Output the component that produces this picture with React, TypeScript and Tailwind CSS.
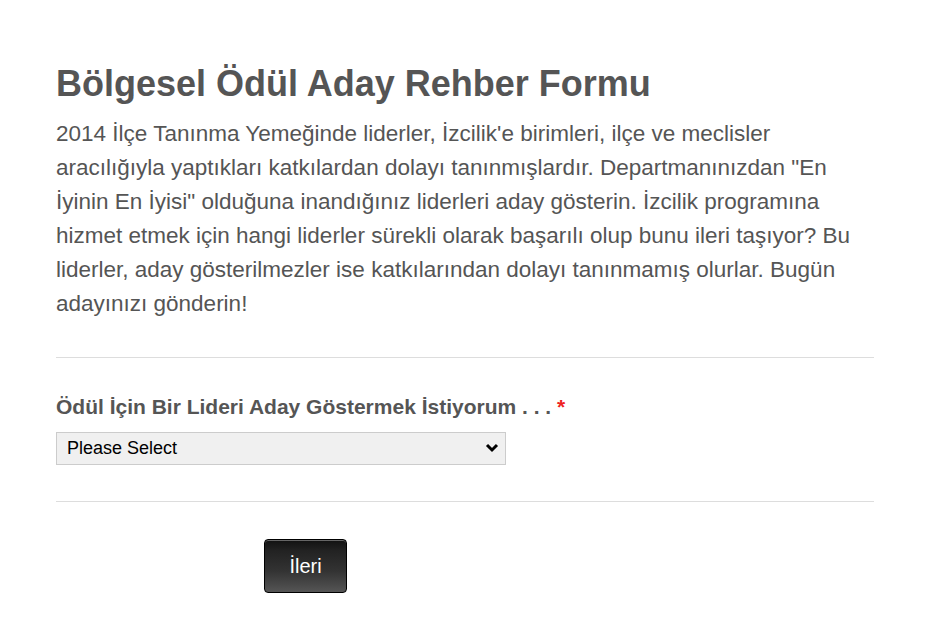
export default function App() {
  return (
    <div className="w-[930px] h-[630px] bg-white font-['Liberation_Sans',Arial,sans-serif] text-[#555555]">
      <div className="pl-[56px] pr-[56px] pt-[60px]">
        <h1 className="text-[36px] font-bold leading-[48px] whitespace-nowrap">Bölgesel Ödül Aday Rehber Formu</h1>
        <p className="text-[22.5px] leading-[34px] mt-[9px] whitespace-nowrap">
          2014 İlçe Tanınma Yemeğinde liderler, İzcilik'e birimleri, ilçe ve meclisler<br />
          aracılığıyla yaptıkları katkılardan dolayı tanınmışlardır. Departmanınızdan "En<br />
          İyinin En İyisi" olduğuna inandığınız liderleri aday gösterin. İzcilik programına<br />
          hizmet etmek için hangi liderler sürekli olarak başarılı olup bunu ileri taşıyor? Bu<br />
          liderler, aday gösterilmezler ise katkılarından dolayı tanınmamış olurlar. Bugün<br />
          adayınızı gönderin!
        </p>
        <div className="mt-[36px] h-px bg-[#dddddd]" />
        <div className="pt-[38px] pb-[36px]">
          <div className="text-[21px] font-bold leading-[22px] whitespace-nowrap">
            Ödül İçin Bir Lideri Aday Göstermek İstiyorum . . . <span className="text-[#e22]">*</span>
          </div>
          <div className="relative mt-[14px] w-[450px] h-[33px]">
            <select className="appearance-none w-full h-full border border-[#cccccc] bg-[#f0f0f0] bg-[radial-gradient(#d8d8d8_0.6px,transparent_0.6px)] bg-[length:6px_6px] pl-[10px] text-[18px] text-black outline-none">
              <option>Please Select</option>
            </select>
            <svg className="absolute right-[7px] top-[11px] pointer-events-none" width="14" height="10" viewBox="0 0 14 10">
              <path d="M2 2 L7 7 L12 2" stroke="black" strokeWidth="3" fill="none" />
            </svg>
          </div>
        </div>
        <div className="h-px bg-[#dddddd]" />
        <div className="pt-[37px] pl-[208px]">
          <button className="w-[83px] h-[54px] rounded-[4px] border border-black bg-[linear-gradient(#111_0%,#222_20%,#333_60%,#555_100%)] text-white text-[20px] shadow-[inset_0_1px_0_#666]">
            İleri
          </button>
        </div>
      </div>
    </div>
  );
}
